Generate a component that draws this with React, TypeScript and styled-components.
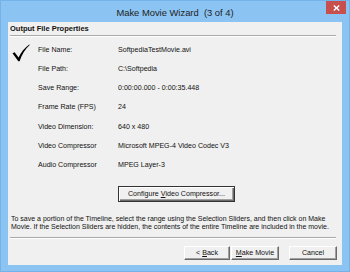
import React from "react";
import styled, { createGlobalStyle } from "styled-components";

const Global = createGlobalStyle`
  html, body { margin: 0; padding: 0; background: #8bc4f2; }
  body { font-family: "Liberation Sans", Arial, sans-serif; }
`;

const Window = styled.div`
  width: 350px;
  height: 272px;
  box-sizing: border-box;
  background: #8bc4f2;
  border: 1px solid #74b3ea;
  display: flex;
  flex-direction: column;
`;

const TitleBar = styled.div`
  height: 21px;
  display: grid;
  grid-template-columns: 1fr auto 1fr;
  align-items: center;
  flex: none;
`;

const Title = styled.div`
  grid-column: 2;
  font-family: "Liberation Sans", Arial, sans-serif;
  font-size: 9.4px;
  color: #1e1e1e;
  white-space: pre;
  padding-top: 1px;
`;

const CloseButton = styled.div`
  grid-column: 3;
  justify-self: end;
  align-self: start;
  width: 20px;
  height: 13px;
  margin-right: 3px;
  background: #c7504f;
  display: flex;
  align-items: center;
  justify-content: center;
`;

const Client = styled.div`
  flex: 1;
  margin: 0 7px 6px 7px;
  background: #f0f0f0;
  padding: 0 6px 0 2px;
  display: flex;
  flex-direction: column;
  color: #111;
  font-size: 7.1px;
`;

const Header = styled.div`
  padding-top: 2px;
  font-weight: bold;
  font-size: 7.5px;
  line-height: 9px;
  color: #111;
`;

const Separator = styled.div<{ $top: number }>`
  margin-top: ${(p) => p.$top}px;
  border-top: 1px solid #a9a9a9;
  border-bottom: 1px solid #ffffff;
`;

const Body = styled.div`
  margin-top: 3px;
  display: flex;
`;

const CheckCell = styled.div`
  width: 28px;
  flex: none;
  padding-top: 4px;
  padding-left: 2px;
  box-sizing: border-box;
`;

const Props = styled.div`
  display: grid;
  grid-template-columns: 80px 1fr;
  grid-auto-rows: 19.25px;
  align-items: center;
`;

const Label = styled.div`
  white-space: nowrap;
`;

const Value = styled.div`
  white-space: nowrap;
`;

const Btn = styled.div<{ $w: number; $default?: boolean }>`
  width: ${(p) => p.$w}px;
  height: ${(p) => (p.$default ? 16 : 14)}px;
  box-sizing: border-box;
  background: #f0f0f0;
  border: 1px solid;
  border-color: ${(p) =>
    p.$default ? "#333 #333 #333 #333" : "#ffffff #6a6a6a #6a6a6a #ffffff"};
  box-shadow: ${(p) =>
    p.$default
      ? "inset 1px 1px #ffffff, inset -1px -1px #6a6a6a, inset -2px -2px #a0a0a0"
      : "inset -1px -1px #a0a0a0"};
  display: flex;
  align-items: center;
  justify-content: center;
  font-size: 7.1px;
  color: #111;
  white-space: nowrap;
  flex: none;
`;

const ConfigureRow = styled.div`
  margin-top: 11px;
  padding-left: 108px;
  display: flex;
`;

const Paragraph = styled.div`
  margin-top: 13px;
  font-size: 7px;
  line-height: 8.5px;
  white-space: nowrap;
  padding-left: 1px;
`;

const ButtonRow = styled.div`
  margin-top: 7px;
  margin-right: -1px;
  display: flex;
  justify-content: flex-end;
  gap: 1px;
`;

const Spacer = styled.div`
  width: 8px;
  flex: none;
`;

const CheckMark = () => (
  <svg width="18" height="18" viewBox="0 0 18 18">
    <path
      d="M0.5 9.2 L2.6 8.3 L6.6 13.6 C8.8 8.6 12.2 4 17.2 0.4 L17.7 1.0 C13.2 5.2 10 10.2 7.6 17.3 L6.3 17.3 Z"
      fill="#000"
    />
  </svg>
);

const XIcon = () => (
  <svg width="7" height="6" viewBox="0 0 7 6">
    <path d="M0.8 0.5 L6.2 5.5 M6.2 0.5 L0.8 5.5" stroke="#fff" strokeWidth="1.4" />
  </svg>
);

const rows: [string, string][] = [
  ["File Name:", "SoftpediaTestMovie.avi"],
  ["File Path:", "C:\\Softpedia"],
  ["Save Range:", "0:00:00.000 - 0:00:35.448"],
  ["Frame Rate (FPS)", "24"],
  ["Video Dimension:", "640 x 480"],
  ["Video Compressor", "Microsoft MPEG-4 Video Codec V3"],
  ["Audio Compressor", "MPEG Layer-3"],
];

export default function App() {
  return (
    <>
      <Global />
      <Window>
        <TitleBar>
          <Title>Make Movie Wizard  (3 of 4)</Title>
          <CloseButton>
            <XIcon />
          </CloseButton>
        </TitleBar>
        <Client>
          <Header>Output File Properties</Header>
          <Separator $top={2} />
          <Body>
            <CheckCell>
              <CheckMark />
            </CheckCell>
            <Props>
              {rows.map(([l, v]) => (
                <React.Fragment key={l}>
                  <Label>{l}</Label>
                  <Value>{v}</Value>
                </React.Fragment>
              ))}
            </Props>
          </Body>
          <ConfigureRow>
            <Btn $w={117} $default>
              Configure&nbsp;<u>V</u>ideo Compressor...
            </Btn>
          </ConfigureRow>
          <Paragraph>
            To save a portion of the Timeline, select the range using the Selection Sliders, and then click on Make
            <br />
            Movie. If the Selection Sliders are hidden, the contents of the entire Timeline are included in the movie.
          </Paragraph>
          <Separator $top={5} />
          <ButtonRow>
            <Btn $w={46}>
              &lt;&nbsp;<u>B</u>ack
            </Btn>
            <Btn $w={48}>
              <u>M</u>ake Movie
            </Btn>
            <Spacer />
            <Btn $w={48}>Cancel</Btn>
          </ButtonRow>
        </Client>
      </Window>
    </>
  );
}
